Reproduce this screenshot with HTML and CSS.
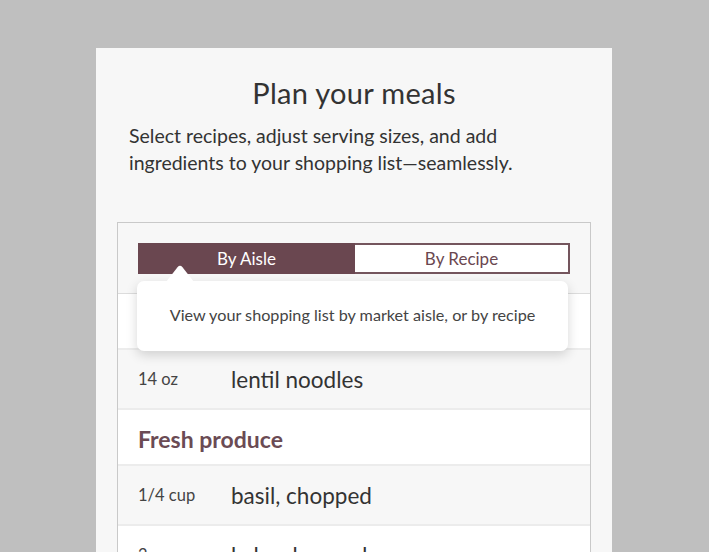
FILE: index.html
```html
<!DOCTYPE html>
<html lang="en">
<head>
<meta charset="utf-8">
<title>Plan your meals</title>
<link rel="stylesheet" href="styles.css">
</head>
<body>
<main class="card">
  <h1 class="title">Plan your meals</h1>
  <p class="lead">Select recipes, adjust serving sizes, and add ingredients to your shopping list—seamlessly.</p>
  <section class="list">
    <div class="list-head">
      <div class="segmented">
        <button class="seg seg-active">By Aisle</button>
        <button class="seg">By Recipe</button>
      </div>
    </div>
    <div class="tooltip">
      <svg class="tip-arrow" width="28" height="17" viewBox="0 0 28 17"><path d="M0 17 L11.5 2.2 Q14 -0.6 16.5 2.2 L28 17 Z" fill="#fff"/></svg>
      View your shopping list by market aisle, or by recipe
    </div>
    <div class="row section"></div>
    <div class="row item"><span class="qty">14 oz</span><span class="name">lentil noodles</span></div>
    <div class="row section">Fresh produce</div>
    <div class="row item"><span class="qty">1/4 cup</span><span class="name">basil, chopped</span></div>
    <div class="row item alt"><span class="qty">2 cups</span><span class="name">kale, chopped</span></div>
  </section>
</main>
</body>
</html>
```
FILE: styles.css
```css
html, body {
  margin: 0;
  padding: 0;
}
body {
  background: #bfbfbf;
  padding: 48px 0 0 96px;
  font-family: "Lato", "Open Sans", sans-serif;
  color: #333;
}
.card {
  width: 516px;
  height: 504px;
  box-sizing: border-box;
  background: #f7f7f7;
  padding: 28px 21px 0;
  overflow: hidden;
}
.title {
  margin: 0;
  text-align: center;
  font-weight: 400;
  font-size: 29px;
  line-height: 34px;
  color: #333;
  letter-spacing: 0.3px;
}
.lead {
  margin: 12px 0 0 12px;
  font-size: 19.5px;
  line-height: 27px;
  color: #333;
  width: 440px;
}
.list {
  position: relative;
  margin-top: 46px;
  border: 1px solid #c9c9c9;
  border-bottom: 0;
}
.list-head {
  padding: 20px 20px 19px;
  border-bottom: 1px solid #dcdcdc;
}
.segmented {
  display: flex;
  height: 31px;
}
.seg {
  flex: 1;
  margin: 0;
  padding: 0;
  font-family: inherit;
  font-size: 17px;
  color: #6a4750;
  background: #fff;
  border: 2px solid #74555d;
  border-left: 0;
}
.seg-active {
  background: #6a4750;
  color: #fff;
  border-color: #6a4750;
  border-left: 2px solid #6a4750;
}
.tooltip {
  position: absolute;
  left: 19px;
  top: 58px;
  width: 431px;
  height: 70px;
  box-sizing: border-box;
  padding-bottom: 4px;
  background: #fff;
  border-radius: 7px;
  box-shadow: 0 4px 12px rgba(0, 0, 0, 0.16);
  display: flex;
  align-items: center;
  justify-content: center;
  font-size: 16.2px;
  color: #444;
}
.tip-arrow {
  position: absolute;
  left: 29px;
  top: -16px;
}
.row {
  display: flex;
  align-items: center;
  padding: 0 20px;
  border-bottom: 2px solid #ececec;
}
.section {
  height: 50px;
  padding-top: 4px;
  background: #fff;
  font-size: 23px;
  font-weight: 700;
  color: #6b4b54;
}
.item {
  height: 58px;
  background: #f7f7f7;
}
.item.alt {
  background: #fff;
}
.qty {
  width: 93px;
  font-size: 16.5px;
  color: #444;
}
.name {
  font-size: 22.5px;
  color: #333;
}
```
